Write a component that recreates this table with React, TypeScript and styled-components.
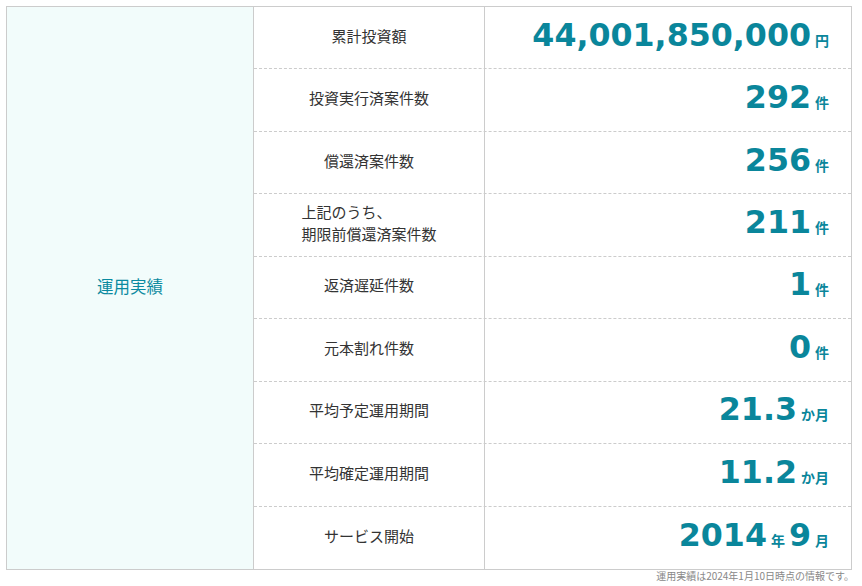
import React from "react";
import styled, { createGlobalStyle } from "styled-components";

const GlobalStyle = createGlobalStyle`
  html, body { margin: 0; padding: 0; background: #ffffff; }
  body { font-family: "Noto Sans CJK JP", "Noto Sans", sans-serif; }
`;

const Page = styled.div`
  padding: 6px 0 0 6px;
  width: 846px;
`;

const Table = styled.div`
  display: flex;
  height: 564px;
  box-sizing: border-box;
  border: 1px solid #cccccc;
`;

const Heading = styled.div`
  width: 247px;
  box-sizing: border-box;
  border-right: 1px solid #cccccc;
  background: #f2fcfb;
  display: flex;
  align-items: center;
  justify-content: center;
  color: #0a8aa0;
  font-size: 16.5px;
  padding-bottom: 4px;
`;

const Rows = styled.div`
  flex: 1;
  display: grid;
  grid-template-rows: repeat(9, 1fr);
`;

const Row = styled.div<{ $last?: boolean }>`
  display: grid;
  grid-template-columns: 231px 1fr;
  border-bottom: ${(p) => (p.$last ? "none" : "1px dashed #cccccc")};
`;

const Label = styled.div`
  border-right: 1px solid #cccccc;
  display: flex;
  align-items: center;
  justify-content: center;
  color: #333333;
  font-size: 15px;
  line-height: 22px;
  padding-bottom: 4px;
`;

const LabelText = styled.span`
  display: inline-block;
  text-align: left;
  white-space: pre-line;
`;

const Value = styled.div`
  display: flex;
  align-items: center;
  justify-content: flex-end;
  padding: 0 22px 6px 0;
  color: #0a869b;
  font-weight: bold;
`;

const Line = styled.span`
  white-space: nowrap;
`;

const Num = styled.span`
  font-family: "DejaVu Sans", sans-serif;
  font-weight: bold;
  font-size: 31.7px;
`;

const Unit = styled.span`
  font-family: "Noto Sans CJK JP", sans-serif;
  font-weight: bold;
  font-size: 14px;
  margin-left: 4px;
  margin-right: 4px;
  &:last-child {
    margin-right: 0;
  }
`;

const Note = styled.div`
  text-align: right;
  font-size: 10px;
  line-height: 12px;
  color: #888888;
  margin-top: 0;
  margin-right: -2px;
`;

type Part = [string, string];

const rows: { label: string; parts: Part[] }[] = [
  { label: "累計投資額", parts: [["44,001,850,000", "円"]] },
  { label: "投資実行済案件数", parts: [["292", "件"]] },
  { label: "償還済案件数", parts: [["256", "件"]] },
  { label: "上記のうち、\n期限前償還済案件数", parts: [["211", "件"]] },
  { label: "返済遅延件数", parts: [["1", "件"]] },
  { label: "元本割れ件数", parts: [["0", "件"]] },
  { label: "平均予定運用期間", parts: [["21.3", "か月"]] },
  { label: "平均確定運用期間", parts: [["11.2", "か月"]] },
  { label: "サービス開始", parts: [["2014", "年"], ["9", "月"]] },
];

export default function App() {
  return (
    <>
      <GlobalStyle />
      <Page>
        <Table>
          <Heading>運用実績</Heading>
          <Rows>
            {rows.map((r, i) => (
              <Row key={i} $last={i === rows.length - 1}>
                <Label>
                  <LabelText>{r.label}</LabelText>
                </Label>
                <Value>
                  <Line>
                    {r.parts.map(([n, u], j) => (
                      <React.Fragment key={j}>
                        <Num>{n}</Num>
                        <Unit>{u}</Unit>
                      </React.Fragment>
                    ))}
                  </Line>
                </Value>
              </Row>
            ))}
          </Rows>
        </Table>
        <Note>運用実績は2024年1月10日時点の情報です。</Note>
      </Page>
    </>
  );
}
